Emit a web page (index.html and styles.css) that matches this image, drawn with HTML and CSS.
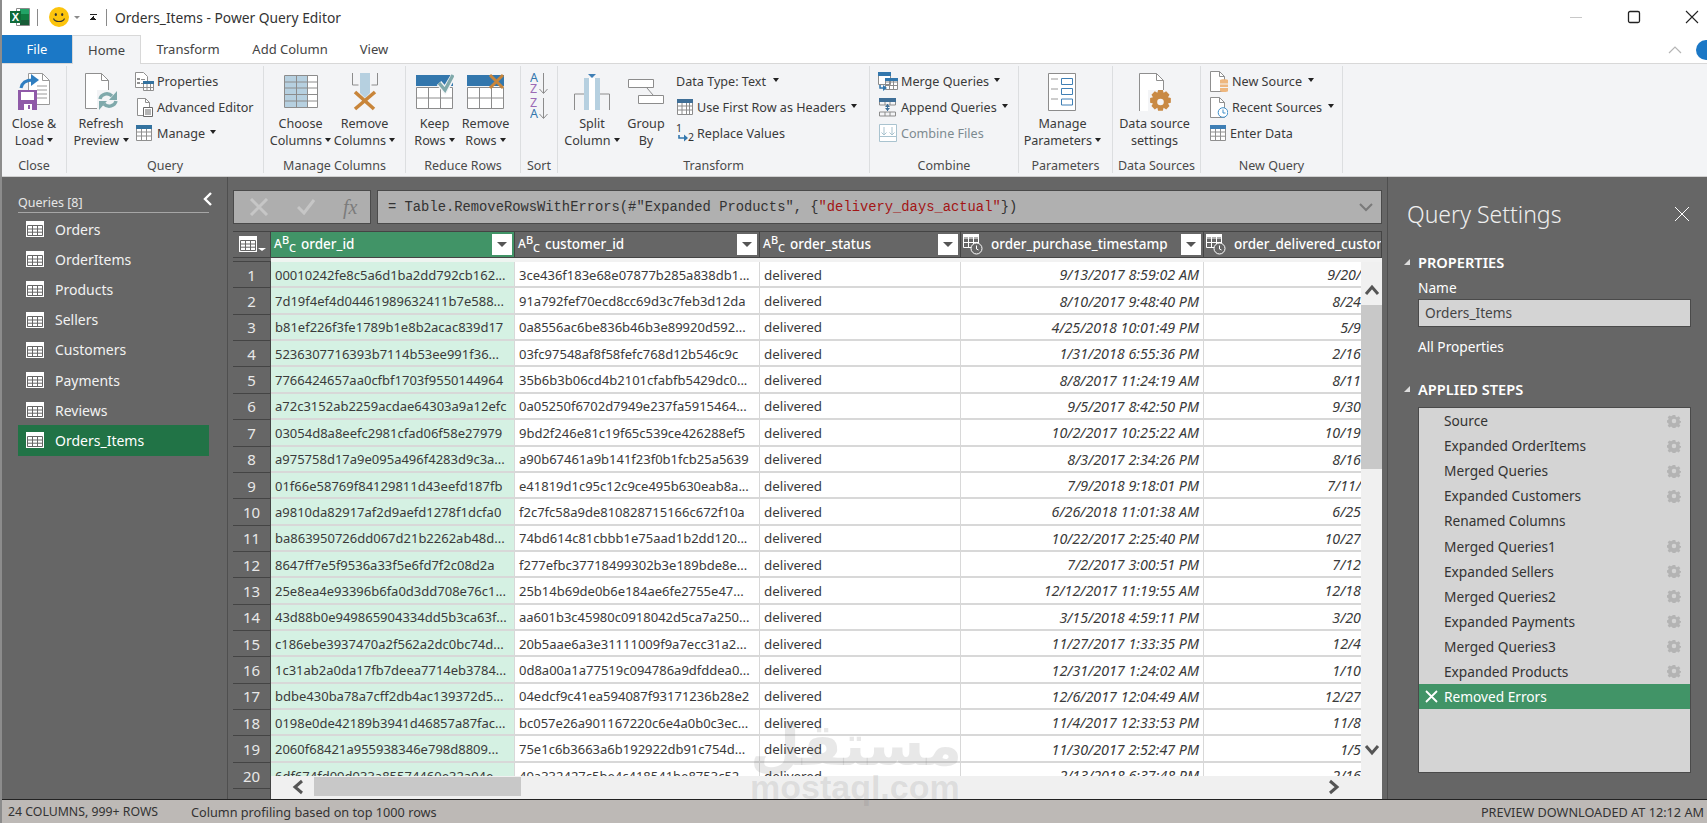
FILE: index.html
```html
<!DOCTYPE html>
<html>

<head>
  <meta charset="utf-8">
  <meta name="viewport" content="width=device-width, initial-scale=1">
  <title>Orders_Items - Power Query Editor</title>
  <link rel="stylesheet" href="styles.css">
</head>

<body>
  <svg class="defs" width="0" height="0">
    <symbol id="i-table" viewBox="0 0 18 16">
      <path fill="#fff" d="M0 0h18v16H0z" />
      <path fill="none" stroke="#666" d="M1.500 4.500h15v10h-15zM1.500 8h15M1.500 11.200h15M6.500 4.500v10M11.500 4.500v10" />
    </symbol>
    <symbol id="i-gear" viewBox="0 0 16 16">
      <path fill="#b4b4b4" d="M6.500 1h3l.4 2 1.500.7 1.800-1.100 2 2-1.100 1.800.7 1.500 2 .4v1.400l-2 .4-.7 1.500 1.100 1.800-2 2-1.800-1.100-1.500.7-.4 2h-3l-.4-2-1.500-.7-1.800 1.100-2-2 1.100-1.800-.7-1.500-2-.4V7.300l2-.4.7-1.500-1.100-1.800 2-2 1.800 1.100 1.500-.7z" />
      <circle cx="8" cy="8" r="2.600" fill="#d4d4d4" />
    </symbol>
    <symbol id="i-cal" viewBox="0 0 20 22">
      <path fill="none" stroke="#fff" d="M.5 1.500h15v13H.5zM.5 5h15M5.500 1.500v13M10.500 1.500v13M.5 9.500h15" />
      <path fill="#fff" d="M0 1h16v3H0z" />
      <circle cx="13.500" cy="15.500" r="5.500" fill="#666" stroke="#fff" />
      <path fill="none" stroke="#fff" d="M13.500 12.500v3.500l2 1" />
    </symbol>
  </svg>

  <div class="window">
    <div class="titlebar">
      <svg class="excel" width="20" height="18" viewBox="0 0 20 18">
        <path fill="#fff" stroke="#8a8a8a" d="M6.500.500h13v17h-13z" />
        <path fill="#21a366" d="M10 1h9v5h-9z" />
        <path fill="#107c41" d="M10 6h9v6h-9z" />
        <path fill="#185c37" d="M10 12h9v5h-9z" />
        <path fill="#0f6b3a" d="M0 3h11v12H0z" />
        <text x="5.500" y="12.500" class="excel-x">X</text>
      </svg>
      <span class="title-sep"></span>
      <svg class="smiley" width="20" height="20" viewBox="0 0 20 20">
        <circle cx="10" cy="10" r="10" fill="#fcc40c" />
        <ellipse cx="6.800" cy="7.500" rx="1.100" ry="1.600" fill="#333" />
        <ellipse cx="13.200" cy="7.500" rx="1.100" ry="1.600" fill="#333" />
        <path fill="none" stroke="#333" stroke-width="1.100" d="M4.500 11.500c1.500 4 9.500 4 11 0" />
      </svg>
      <span class="qa-arrow"></span>
      <span class="qa-more"></span>
      <span class="title-sep second"></span>
      <span class="title-text">Orders_Items - Power Query Editor</span>
      <span class="win-controls">
        <svg width="14" height="14" viewBox="0 0 14 14"><path stroke="#c8c8c8" d="M1 7.500h12" /></svg>
        <svg width="14" height="14" viewBox="0 0 14 14"><rect x="1.500" y="1.500" width="11" height="11" rx="1.500" fill="none" stroke="#222" stroke-width="1.300" /></svg>
        <svg width="14" height="14" viewBox="0 0 14 14"><path stroke="#222" stroke-width="1.100" d="M1 1l12 12M13 1L1 13" /></svg>
      </span>
    </div>

    <div class="tabs">
      <div class="tab file">File</div>
      <div class="tab active">Home</div>
      <div class="tab t-transform">Transform</div>
      <div class="tab t-add">Add Column</div>
      <div class="tab t-view">View</div>
      <div class="tabs-right">
        <svg width="14" height="8" viewBox="0 0 14 8"><path fill="none" stroke="#b5b5b5" stroke-width="1.200" d="M1 7l6-6 6 6" /></svg>
        <span class="help"></span>
      </div>
    </div>

    <div class="ribbon">
      <div class="group g-close">
        <div class="group-body">
          <div class="big">
            <svg class="big-icon" width="34" height="38" viewBox="0 0 34 38">
              <path fill="#fff" stroke="#9a9a9a" d="M11.500.500h14l7 7v24h-21z" />
              <path fill="none" stroke="#9a9a9a" d="M25.500.500v7h7M20 13h10M20 17h10M20 21h10M20 25h10" />
              <path fill="none" stroke="#2f7ec0" stroke-width="3" d="M4 15c1-6 6-8 12-8" />
              <path fill="#2f7ec0" d="M14 1l8 6-8 6z" />
              <path fill="#8f5aa8" d="M1 17h19v20H1z" />
              <path fill="#fff" d="M4 19h13v8H4zM7 31h8v6H7z" />
              <path fill="#8f5aa8" d="M11 32h2v4h-2z" />
            </svg>
            <div class="big-text">Close &amp;<br>Load <i class="caret"></i></div>
          </div>
        </div>
        <div class="group-label">Close</div>
      </div>

      <div class="group g-query">
        <div class="group-body">
          <div class="big">
            <svg class="big-icon" width="36" height="38" viewBox="0 0 36 38">
              <path fill="#fff" stroke="#8f8f8f" d="M2.500.500h16l7 7v28h-23z" />
              <path fill="none" stroke="#8f8f8f" d="M18.500.500v7h7" />
              <rect x="14" y="17" width="22" height="21" fill="#f3f4f6" />
              <path fill="none" stroke="#7fa9ab" stroke-width="3.400" d="M17 26c1-5 8-7 12-3M33 28c-1 5-8 7-12 3" />
              <path fill="#7fa9ab" d="M34 18v9h-8zM16 37v-9h8z" />
            </svg>
            <div class="big-text">Refresh<br>Preview <i class="caret"></i></div>
          </div>
          <div class="stack">
            <div class="small">
              <svg width="20" height="20" viewBox="0 0 20 20">
                <path fill="#fff" stroke="#8f8f8f" d="M1.500 1.500h8l4 4v11h-12z" />
                <path fill="#8f8f8f" d="M3 7h3v2H3zM3 11h3v2H3zM7 8h4v1H7zM7 12h2v1H7z" />
                <path fill="#fff" stroke="#8f8f8f" d="M9.500 10.500h10v9h-10z" />
                <path fill="#33729f" d="M9 10h11v3H9z" />
                <path stroke="#8f8f8f" d="M9.500 16.500h10M13 13v7M16.500 13v7" />
              </svg>
              <span>Properties</span>
            </div>
            <div class="small">
              <svg width="20" height="20" viewBox="0 0 20 20">
                <path fill="#fff" stroke="#8f8f8f" d="M3.500 1.500h8l4 4v13h-12z" />
                <path fill="none" stroke="#8f8f8f" d="M11.500 1.500v4h4" />
                <path fill="#fff" stroke="#6a6a6a" d="M9.500 10.500h9v9h-9z" />
                <path stroke="#6a6a6a" d="M11 13h6M11 15h6M11 17h6" />
              </svg>
              <span>Advanced Editor</span>
            </div>
            <div class="small">
              <svg width="20" height="18" viewBox="0 0 20 18">
                <path fill="#fff" stroke="#8f8f8f" d="M2.500 1.500h15v15h-15zM2.500 8h15M2.500 12h15M7.500 5v11.500M12.500 5v11.500" />
                <path fill="#33729f" d="M2 1h16v4H2z" />
              </svg>
              <span>Manage</span><i class="caret gap"></i>
            </div>
          </div>
        </div>
        <div class="group-label">Query</div>
      </div>

      <div class="group g-columns">
        <div class="group-body">
          <div class="big">
            <svg class="big-icon" width="34" height="34" viewBox="0 0 34 34">
              <path fill="#fff" d="M0 0h34v33H0z" />
              <path fill="#b6d0e0" d="M1 1h23v31H1z" />
              <path fill="none" stroke="#8c8c8c" d="M.5.500h33v32H.500zM.5 7h33M.5 13h33M.5 19.500h33M.5 26h33M12.500.500v32M23.500.500v32" />
            </svg>
            <div class="big-text">Choose<br>Columns <i class="caret"></i></div>
          </div>
          <div class="big">
            <svg class="big-icon" width="26" height="38" viewBox="0 0 26 38">
              <path fill="none" stroke="#8c8c8c" d="M.5 0v12h6M25.500 0v12h-6" />
              <path fill="#b6d0e0" d="M8 0h10v20l-5 5-5-5z" />
              <path fill="none" stroke="#c8853a" stroke-width="3.600" d="M3 19l19 17M23 19L3 36" />
            </svg>
            <div class="big-text">Remove<br>Columns <i class="caret"></i></div>
          </div>
        </div>
        <div class="group-label">Manage Columns</div>
      </div>

      <div class="group g-rows">
        <div class="group-body">
          <div class="big">
            <svg class="big-icon" width="38" height="38" viewBox="0 0 38 38">
              <path fill="#3377ad" d="M0 2h37v11H0z" />
              <path fill="#fff" stroke="#8c8c8c" d="M.5 14.500h36v21h-36zM.5 25h36M12.500 14.500v21M24.500 14.500v21" />
              <path fill="none" stroke="#f3f4f6" stroke-width="6" d="M23 10l6 7 9-15" />
              <path fill="none" stroke="#7fa9ab" stroke-width="3.400" d="M23 10l6 7 8-15" />
            </svg>
            <div class="big-text">Keep<br>Rows <i class="caret"></i></div>
          </div>
          <div class="big">
            <svg class="big-icon" width="38" height="38" viewBox="0 0 38 38">
              <path fill="#3377ad" d="M0 2h37v11H0z" />
              <path fill="#fff" stroke="#8c8c8c" d="M.5 14.500h36v21h-36zM.5 25h36M12.500 14.500v21M24.500 14.500v21" />
              <path fill="none" stroke="#c8853a" stroke-width="3" d="M23 2l13 13M36 2L23 15" />
            </svg>
            <div class="big-text">Remove<br>Rows <i class="caret"></i></div>
          </div>
        </div>
        <div class="group-label">Reduce Rows</div>
      </div>

      <div class="group g-sort">
        <div class="group-body">
          <div class="sort-stack">
            <svg width="18" height="24" viewBox="0 0 18 24">
              <text x="0" y="10" class="sort-a">A</text>
              <text x="0" y="21" class="sort-z">Z</text>
              <path fill="none" stroke="#8c8c8c" d="M13.500 1v20M9.500 17l4 4.500 4-4.500" />
            </svg>
            <svg width="18" height="24" viewBox="0 0 18 24">
              <text x="0" y="10" class="sort-z">Z</text>
              <text x="0" y="21" class="sort-a">A</text>
              <path fill="none" stroke="#8c8c8c" d="M13.500 1v20M9.500 17l4 4.500 4-4.500" />
            </svg>
          </div>
        </div>
        <div class="group-label">Sort</div>
      </div>

      <div class="group g-transform">
        <div class="group-body">
          <div class="big">
            <svg class="big-icon" width="36" height="38" viewBox="0 0 36 38">
              <path fill="none" stroke="#8c8c8c" d="M.5 37V21h10M35.500 37V21h-10" />
              <path fill="#b6d0e0" d="M10 5h5v32h-5zM21 5h5v32h-5z" />
              <path fill="#fff" d="M15 5h6v32h-6z" />
              <path fill="#3f7fb5" d="M14 1h8l-4 4z" />
            </svg>
            <div class="big-text">Split<br>Column <i class="caret"></i></div>
          </div>
          <div class="big">
            <svg class="big-icon" width="36" height="26" viewBox="0 0 36 26">
              <path fill="#fff" stroke="#8c8c8c" d="M.5.500h25v8h-25zM10.500 16.500h25v8h-25z" />
              <path fill="none" stroke="#8c8c8c" d="M19 9l6 7" />
            </svg>
            <div class="big-text">Group<br>By</div>
          </div>
          <div class="stack">
            <div class="small plain">Data Type: Text<i class="caret gap"></i></div>
            <div class="small">
              <svg width="18" height="18" viewBox="0 0 18 18">
                <path fill="#fff" stroke="#8c8c8c" d="M1.500 1.500h15v15h-15zM1.500 8h15M1.500 12h15M6 5v11.500M10.500 5v11.500M13.500 5v11.500" />
                <path fill="#3f6f97" d="M1 1h16v4H1z" />
              </svg>
              <span>Use First Row as Headers</span><i class="caret gap"></i>
            </div>
            <div class="small">
              <svg width="18" height="20" viewBox="0 0 18 20">
                <text x="0" y="9" class="rep-num">1</text>
                <text x="12" y="18" class="rep-num">2</text>
                <path fill="none" stroke="#3377ad" stroke-width="1.600" d="M3 12v3h6" />
                <path fill="#3377ad" d="M8 11.500l4 3.500-4 3.500z" />
              </svg>
              <span>Replace Values</span>
            </div>
          </div>
        </div>
        <div class="group-label">Transform</div>
      </div>

      <div class="group g-combine">
        <div class="group-body">
          <div class="stack">
            <div class="small">
              <svg width="20" height="20" viewBox="0 0 20 20">
                <path fill="#fff" stroke="#8c8c8c" d="M.5 1.500h12v12H.5zM7.500 7.500h12v11h-12zM7.500 11h12M7.500 14.500h12M11.500 7.500v11M15.500 7.500v11" />
                <path fill="#3377ad" d="M0 1h13v4H0zM7 7h13v3H7z" />
                <path fill="none" stroke="#3377ad" stroke-width="1.500" d="M2 14v3h4" />
                <path fill="#3377ad" d="M5 14l4 3-4 3z" />
              </svg>
              <span>Merge Queries</span><i class="caret gap"></i>
            </div>
            <div class="small">
              <svg width="20" height="20" viewBox="0 0 20 20">
                <path fill="#3f6f97" d="M1 1h17v4H1z" />
                <path fill="none" stroke="#8c8c8c" d="M1.500 5v3h16V5M7 5v3M12 5v3M1.500 19v-4h16v4h-16zM7 15v4M12 15v4" />
                <path fill="none" stroke="#3f6f97" d="M9.500 7v7" />
                <path fill="#3f6f97" d="M7 10l2.500-3L12 10zM7 11l2.500 3 2.500-3z" />
              </svg>
              <span>Append Queries</span><i class="caret gap"></i>
            </div>
            <div class="small muted">
              <svg width="20" height="20" viewBox="0 0 20 20">
                <path fill="#fff" stroke="#a9c3cf" d="M1.500 1.500h17v17h-17zM2 13.500h16" />
                <path fill="none" stroke="#a9c3cf" d="M6 4v8M3.500 9.500L6 12l2.500-2.500M14 4v8M11.500 9.500L14 12l2.500-2.500" />
              </svg>
              <span>Combine Files</span>
            </div>
          </div>
        </div>
        <div class="group-label">Combine</div>
      </div>

      <div class="group g-params">
        <div class="group-body">
          <div class="big">
            <svg class="big-icon" width="28" height="38" viewBox="0 0 28 38">
              <path fill="#fff" stroke="#8c8c8c" d="M.5.500h27v37H.500z" />
              <path stroke="#9a9a9a" d="M3 6h7M3 16h7M3 26h7" />
              <path fill="#fff" stroke="#3f7fb5" d="M13.500 5.500h11v6h-11zM13.500 15.500h11v6h-11zM13.500 26h11v6h-11z" />
            </svg>
            <div class="big-text">Manage<br>Parameters <i class="caret"></i></div>
          </div>
        </div>
        <div class="group-label">Parameters</div>
      </div>

      <div class="group g-sources">
        <div class="group-body">
          <div class="big">
            <svg class="big-icon" width="32" height="38" viewBox="0 0 32 38">
              <path fill="#fff" stroke="#8f8f8f" d="M.5.500h17l7 7v31H.5z" />
              <path fill="none" stroke="#8f8f8f" d="M17.500.500v7h7" />
              <rect x="9" y="17" width="23" height="21" fill="#f3f4f6" />
              <path fill="#c98a44" d="M18 20h5l.8 3 2.700-1.600 3.500 3.500-1.600 2.700 3 .8v5l-3 .8 1.600 2.700-3.500 3.500-2.700-1.600-.8 3h-5l-.8-3-2.700 1.600-3.500-3.500 1.600-2.700-3-.8v-5l3-.8-1.600-2.700 3.500-3.500 2.700 1.600z" transform="translate(2 -2) scale(.95)" />
              <circle cx="21.500" cy="29" r="3.300" fill="#f3f4f6" />
            </svg>
            <div class="big-text">Data source<br>settings</div>
          </div>
        </div>
        <div class="group-label">Data Sources</div>
      </div>

      <div class="group g-new">
        <div class="group-body">
          <div class="stack">
            <div class="small tight">
              <svg width="18" height="21" viewBox="0 0 18 21">
                <path fill="#fff" stroke="#8f8f8f" d="M.5.500h9l5 5v15H.5z" />
                <path fill="none" stroke="#8f8f8f" d="M9.500.500v5h5" />
                <path fill="#eeb77f" d="M10 9c0-1 8-1 8 0v11c0 1.300-8 1.300-8 0z" />
                <path stroke="#f3f4f6" d="M10 13h8M10 16.500h8" />
              </svg>
              <span>New Source</span><i class="caret gap"></i>
            </div>
            <div class="small tight">
              <svg width="18" height="21" viewBox="0 0 18 21">
                <path fill="#fff" stroke="#8f8f8f" d="M.5.500h9l5 5v15H.5z" />
                <path fill="none" stroke="#8f8f8f" d="M9.500.500v5h5" />
                <circle cx="13" cy="15.500" r="4.800" fill="#fff" stroke="#3f8fc9" />
                <path fill="none" stroke="#3f8fc9" d="M13 12.500v3.500h2.500" />
              </svg>
              <span>Recent Sources</span><i class="caret gap"></i>
            </div>
            <div class="small tight">
              <svg width="16" height="18" viewBox="0 0 16 18">
                <path fill="#fff" stroke="#8f8f8f" d="M.5 1.500h15v15H.5zM.5 8h15M.5 12.200h15M5.500 5v11.500M10.500 5v11.500" />
                <path fill="#3f7fb5" d="M0 1h16v4H0z" />
              </svg>
              <span>Enter Data</span>
            </div>
          </div>
        </div>
        <div class="group-label">New Query</div>
      </div>
    </div>

    <div class="main">
      <div class="queries">
        <div class="queries-head">
          <span>Queries [8]</span>
          <svg width="9" height="14" viewBox="0 0 9 14"><path fill="none" stroke="#fff" stroke-width="2.400" d="M8 1L2 7l6 6" /></svg>
        </div>
        <div class="query"><svg width="18" height="16"><use href="#i-table" /></svg>Orders</div>
        <div class="query"><svg width="18" height="16"><use href="#i-table" /></svg>OrderItems</div>
        <div class="query"><svg width="18" height="16"><use href="#i-table" /></svg>Products</div>
        <div class="query"><svg width="18" height="16"><use href="#i-table" /></svg>Sellers</div>
        <div class="query"><svg width="18" height="16"><use href="#i-table" /></svg>Customers</div>
        <div class="query"><svg width="18" height="16"><use href="#i-table" /></svg>Payments</div>
        <div class="query"><svg width="18" height="16"><use href="#i-table" /></svg>Reviews</div>
        <div class="query selected"><svg width="18" height="16"><use href="#i-table" /></svg>Orders_Items</div>
      </div>

      <div class="center">
        <div class="formula-row">
          <div class="formula-btns">
            <svg width="20" height="18" viewBox="0 0 20 18"><path stroke="#c6c6c6" stroke-width="3" d="M2 1l16 16M18 1L2 17" /></svg>
            <svg width="18" height="16" viewBox="0 0 18 16"><path fill="none" stroke="#c6c6c6" stroke-width="3" d="M1 8l6 6L17 1" /></svg>
            <span class="fx">fx</span>
          </div>
          <div class="formula">
            <span>= Table.RemoveRowsWithErrors(#"Expanded Products", {<b>"delivery_days_actual"</b>})</span>
            <svg width="14" height="9" viewBox="0 0 14 9"><path fill="none" stroke="#7a7a7a" stroke-width="2" d="M1 1l6 6 6-6" /></svg>
          </div>
        </div>

        <div class="grid">
          <div class="grid-head">
            <div class="hcell corner">
              <svg width="18" height="16"><use href="#i-table" /></svg>
              <i class="corner-caret"></i>
            </div>
            <div class="hcell c1 on"><span class="abc">A<sup>B</sup><sub>C</sub></span><span class="hname">order_id</span><span class="filter"></span></div>
            <div class="hcell c2"><span class="abc">A<sup>B</sup><sub>C</sub></span><span class="hname">customer_id</span><span class="filter"></span></div>
            <div class="hcell c3"><span class="abc">A<sup>B</sup><sub>C</sub></span><span class="hname">order_status</span><span class="filter"></span></div>
            <div class="hcell c4"><svg class="cal" width="20" height="22"><use href="#i-cal" /></svg><span class="hname">order_purchase_timestamp</span><span class="filter"></span></div>
            <div class="hcell c5"><svg class="cal" width="20" height="22"><use href="#i-cal" /></svg><span class="hname">order_delivered_custom</span></div>
          </div>
          <div class="grid-strip"><span class="strip-num"></span><span class="strip-sel"></span></div>

          <div class="grid-body">
            <table class="rows">
              <tr><th>1</th><td class="c1">00010242fe8c5a6d1ba2dd792cb162...</td><td class="c2">3ce436f183e68e07877b285a838db1...</td><td class="c3">delivered</td><td class="c4">9/13/2017 8:59:02 AM</td><td class="c5">9/20/</td></tr>
              <tr><th>2</th><td class="c1">7d19f4ef4d04461989632411b7e588...</td><td class="c2">91a792fef70ecd8cc69d3c7feb3d12da</td><td class="c3">delivered</td><td class="c4">8/10/2017 9:48:40 PM</td><td class="c5">8/24</td></tr>
              <tr><th>3</th><td class="c1">b81ef226f3fe1789b1e8b2acac839d17</td><td class="c2">0a8556ac6be836b46b3e89920d592...</td><td class="c3">delivered</td><td class="c4">4/25/2018 10:01:49 PM</td><td class="c5">5/9</td></tr>
              <tr><th>4</th><td class="c1">5236307716393b7114b53ee991f36...</td><td class="c2">03fc97548af8f58fefc768d12b546c9c</td><td class="c3">delivered</td><td class="c4">1/31/2018 6:55:36 PM</td><td class="c5">2/16</td></tr>
              <tr><th>5</th><td class="c1">7766424657aa0cfbf1703f9550144964</td><td class="c2">35b6b3b06cd4b2101cfabfb5429dc0...</td><td class="c3">delivered</td><td class="c4">8/8/2017 11:24:19 AM</td><td class="c5">8/11</td></tr>
              <tr><th>6</th><td class="c1">a72c3152ab2259acdae64303a9a12efc</td><td class="c2">0a05250f6702d7949e237fa5915464...</td><td class="c3">delivered</td><td class="c4">9/5/2017 8:42:50 PM</td><td class="c5">9/30</td></tr>
              <tr><th>7</th><td class="c1">03054d8a8eefc2981cfad06f58e27979</td><td class="c2">9bd2f246e81c19f65c539ce426288ef5</td><td class="c3">delivered</td><td class="c4">10/2/2017 10:25:22 AM</td><td class="c5">10/19</td></tr>
              <tr><th>8</th><td class="c1">a975758d17a9e095a496f4283d9c3a...</td><td class="c2">a90b67461a9b141f23f0b1fcb25a5639</td><td class="c3">delivered</td><td class="c4">8/3/2017 2:34:26 PM</td><td class="c5">8/16</td></tr>
              <tr><th>9</th><td class="c1">01f66e58769f84129811d43eefd187fb</td><td class="c2">e41819d1c95c12c9ce495b630eab8a...</td><td class="c3">delivered</td><td class="c4">7/9/2018 9:18:01 PM</td><td class="c5">7/11/</td></tr>
              <tr><th>10</th><td class="c1">a9810da82917af2d9aefd1278f1dcfa0</td><td class="c2">f2c7fc58a9de810828715166c672f10a</td><td class="c3">delivered</td><td class="c4">6/26/2018 11:01:38 AM</td><td class="c5">6/25</td></tr>
              <tr><th>11</th><td class="c1">ba863950726dd067d21b2262ab48d...</td><td class="c2">74bd614c81cbbb1e75aad1b2dd120...</td><td class="c3">delivered</td><td class="c4">10/22/2017 2:25:40 PM</td><td class="c5">10/27</td></tr>
              <tr><th>12</th><td class="c1">8647ff7e5f9536a33f5e6fd7f2c08d2a</td><td class="c2">f277efbc37718499302b3e189bde8e...</td><td class="c3">delivered</td><td class="c4">7/2/2017 3:00:51 PM</td><td class="c5">7/12</td></tr>
              <tr><th>13</th><td class="c1">25e8ea4e93396b6fa0d3dd708e76c1...</td><td class="c2">25b14b69de0b6e184ae6fe2755e47...</td><td class="c3">delivered</td><td class="c4">12/12/2017 11:19:55 AM</td><td class="c5">12/18</td></tr>
              <tr><th>14</th><td class="c1">43d88b0e949865904334dd5b3ca63f...</td><td class="c2">aa601b3c45980c0918042d5ca7a250...</td><td class="c3">delivered</td><td class="c4">3/15/2018 4:59:11 PM</td><td class="c5">3/20</td></tr>
              <tr><th>15</th><td class="c1">c186ebe3937470a2f562a2dc0bc74d...</td><td class="c2">20b5aae6a3e31111009f9a7ecc31a2...</td><td class="c3">delivered</td><td class="c4">11/27/2017 1:33:35 PM</td><td class="c5">12/4</td></tr>
              <tr><th>16</th><td class="c1">1c31ab2a0da17fb7deea7714eb3784...</td><td class="c2">0d8a00a1a77519c094786a9dfddea0...</td><td class="c3">delivered</td><td class="c4">12/31/2017 1:24:02 AM</td><td class="c5">1/10</td></tr>
              <tr><th>17</th><td class="c1">bdbe430ba78a7cff2db4ac139372d5...</td><td class="c2">04edcf9c41ea594087f93171236b28e2</td><td class="c3">delivered</td><td class="c4">12/6/2017 12:04:49 AM</td><td class="c5">12/27</td></tr>
              <tr><th>18</th><td class="c1">0198e0de42189b3941d46857a87fac...</td><td class="c2">bc057e26a901167220c6e4a0b0c3ec...</td><td class="c3">delivered</td><td class="c4">11/4/2017 12:33:53 PM</td><td class="c5">11/8</td></tr>
              <tr><th>19</th><td class="c1">2060f68421a955938346e798d8809...</td><td class="c2">75e1c6b3663a6b192922db91c754d...</td><td class="c3">delivered</td><td class="c4">11/30/2017 2:52:47 PM</td><td class="c5">1/5</td></tr>
              <tr><th>20</th><td class="c1">6df674fd09d933a85574460e32a94e...</td><td class="c2">49a332427c5be4c418541be8753c52...</td><td class="c3">delivered</td><td class="c4">2/13/2018 6:37:48 PM</td><td class="c5">2/16</td></tr>
              <tr><th></th><td class="c1"></td><td class="c2"></td><td class="c3"></td><td class="c4"></td><td class="c5"></td></tr>
            </table>

            <div class="vbar">
              <div class="vbar-thumb"></div>
              <svg class="vbar-up" width="16" height="12" viewBox="0 0 16 12"><path fill="none" stroke="#555" stroke-width="3" d="M2 10l6-7 6 7" /></svg>
              <svg class="vbar-down" width="16" height="12" viewBox="0 0 16 12"><path fill="none" stroke="#555" stroke-width="3" d="M2 2l6 7 6-7" /></svg>
            </div>
            <div class="hbar">
              <svg class="hbar-left" width="12" height="16" viewBox="0 0 12 16"><path fill="none" stroke="#555" stroke-width="3" d="M10 2L3 8l7 6" /></svg>
              <div class="hbar-thumb"></div>
              <svg class="hbar-right" width="12" height="16" viewBox="0 0 12 16"><path fill="none" stroke="#555" stroke-width="3" d="M2 2l7 6-7 6" /></svg>
            </div>
          </div>

          <div class="watermark">
            <div class="wm-ar">مستقل</div>
            <div class="wm-en">mostaql.com</div>
          </div>
        </div>
      </div>

      <div class="settings">
        <div class="settings-head">
          <span>Query Settings</span>
          <svg width="14" height="14" viewBox="0 0 14 14"><path stroke="#fff" d="M0 0l14 14M14 0L0 14" /></svg>
        </div>
        <div class="section"><i class="tri"></i>PROPERTIES</div>
        <div class="field-label">Name</div>
        <div class="name-input">Orders_Items</div>
        <div class="all-props">All Properties</div>
        <div class="section applied"><i class="tri"></i>APPLIED STEPS</div>
        <div class="steps">
          <div class="step">Source<svg width="14" height="14"><use href="#i-gear" /></svg></div>
          <div class="step">Expanded OrderItems<svg width="14" height="14"><use href="#i-gear" /></svg></div>
          <div class="step">Merged Queries<svg width="14" height="14"><use href="#i-gear" /></svg></div>
          <div class="step">Expanded Customers<svg width="14" height="14"><use href="#i-gear" /></svg></div>
          <div class="step">Renamed Columns</div>
          <div class="step">Merged Queries1<svg width="14" height="14"><use href="#i-gear" /></svg></div>
          <div class="step">Expanded Sellers<svg width="14" height="14"><use href="#i-gear" /></svg></div>
          <div class="step">Merged Queries2<svg width="14" height="14"><use href="#i-gear" /></svg></div>
          <div class="step">Expanded Payments<svg width="14" height="14"><use href="#i-gear" /></svg></div>
          <div class="step">Merged Queries3<svg width="14" height="14"><use href="#i-gear" /></svg></div>
          <div class="step">Expanded Products<svg width="14" height="14"><use href="#i-gear" /></svg></div>
          <div class="step current">
            <svg class="step-x" width="13" height="13" viewBox="0 0 13 13"><path stroke="#fff" stroke-width="1.800" d="M1 1l11 11M12 1L1 12" /></svg>
            Removed Errors
          </div>
        </div>
      </div>
    </div>

    <div class="statusbar">
      <span class="status-cols">24 COLUMNS, 999+ ROWS</span>
      <span>Column profiling based on top 1000 rows</span>
      <span class="status-right">PREVIEW DOWNLOADED AT 12:12 AM</span>
    </div>
  </div>
</body>

</html>
```

FILE: styles.css
```css
* {
  margin: 0;
  padding: 0;
  box-sizing: border-box;
}

html,
body {
  height: 100%;
  overflow: hidden;
}

body {
  font-family: 'Noto Sans', 'Open Sans', Arial, sans-serif;
  background: #8c8c8c;
  color: #333;
  padding-left: 2px;
}

.defs {
  position: absolute;
}

.window {
  height: 823px;
  display: flex;
  flex-direction: column;
  background: #666;
}

/* title bar */
.titlebar {
  height: 35px;
  flex: none;
  display: flex;
  align-items: center;
  background: #fff;
  padding-bottom: 1px;
}

.excel {
  margin-left: 8px;
}

.excel-x {
  font-family: 'Liberation Sans', Arial, sans-serif;
  font-size: 11px;
  font-weight: bold;
  fill: #fff;
  text-anchor: middle;
}

.title-sep {
  width: 1px;
  height: 17px;
  background: #8a8a8a;
  margin: 0 11px 0 7px;
}

.title-sep.second {
  margin: 0 7px 0 9px;
}

.qa-arrow {
  width: 0;
  height: 0;
  border-left: 3px solid transparent;
  border-right: 3px solid transparent;
  border-top: 3px solid #8a8a8a;
  margin-left: 5px;
}

.qa-more {
  width: 7px;
  height: 6px;
  border-top: 1px solid #222;
  margin-left: 10px;
  background: linear-gradient(135deg, transparent 50%, #222 50%) left bottom / 4px 4px no-repeat,
    linear-gradient(225deg, transparent 50%, #222 50%) right bottom / 4px 4px no-repeat;
}

.title-text {
  font-size: 13.8px;
  color: #333;
  margin-left: 1px;
}

.win-controls {
  margin-left: auto;
  display: flex;
  gap: 44px;
  padding-right: 8px;
}

/* tabs */
.tabs {
  height: 28px;
  flex: none;
  display: flex;
  align-items: stretch;
  background: #fff;
  font-size: 13px;
  position: relative;
}

.tab {
  display: flex;
  align-items: center;
  justify-content: center;
  color: #444;
}

.tab.file {
  width: 70px;
  background: #1b78c6;
  color: #fff;
}

.tab.active {
  width: 69px;
  background: #f3f4f6;
  border: 1px solid #d8d8d8;
  border-bottom: none;
  margin-bottom: -1px;
  position: relative;
  z-index: 1;
}

.t-transform {
  width: 94px;
}

.t-add {
  width: 110px;
}

.t-view {
  width: 58px;
}

.tabs-right {
  margin-left: auto;
  display: flex;
  align-items: center;
  gap: 14px;
  margin-right: -9px;
  padding-top: 2px;
}

.help {
  width: 20px;
  height: 20px;
  border-radius: 50%;
  background: #1b78c6;
}

/* ribbon */
.ribbon {
  height: 114px;
  flex: none;
  display: flex;
  background: #f3f4f6;
  border-top: 1px solid #d8d8d8;
  border-bottom: 1px solid #d0d0d0;
  padding-top: 2px;
  font-size: 12.6px;
  color: #3a3a3a;
}

.group {
  height: 107px;
  flex: none;
  display: flex;
  flex-direction: column;
  border-right: 1px solid #dcdee0;
}

.group-body {
  flex: 1;
  display: flex;
  justify-content: center;
  min-height: 0;
}

.group-label {
  height: 15px;
  line-height: 15px;
  font-size: 12.5px;
  text-align: center;
  color: #4a4a4a;
}

.g-close { width: 65px; }
.g-query { width: 197px; }
.g-columns { width: 142px; }
.g-rows { width: 115px; }
.g-sort { width: 37px; }
.g-transform { width: 312px; }
.g-combine { width: 149px; }
.g-params { width: 94px; }
.g-sources { width: 88px; }
.g-new { width: 142px; }

.g-query .group-body {
  justify-content: flex-start;
  padding-left: 1px;
}

.g-query .big {
  width: 66px;
}

.g-columns .group-body {
  padding-right: 4px;
}

.g-columns .big {
  width: 64px;
}

.g-rows .group-body {
  padding-right: 6px;
}

.g-rows .big {
  width: 51px;
}

.g-transform .group-body {
  justify-content: flex-start;
  padding-left: 7px;
}

.g-transform .big {
  width: 54px;
}

.g-transform .stack {
  margin-left: 3px;
}

.g-combine .group-body {
  justify-content: flex-start;
  padding-left: 8px;
}

.g-new .group-body {
  justify-content: flex-start;
  padding-left: 9px;
}

.g-params .group-body {
  padding-right: 6px;
}

.g-sources .group-body {
  padding-right: 4px;
}

.big {
  display: flex;
  flex-direction: column;
  align-items: center;
}

.big-icon {
  flex: none;
}

.big svg {
  margin-top: 7px;
  margin-bottom: 4px;
}

.g-transform .big:nth-child(2) svg {
  margin-top: 13px;
  margin-bottom: 10px;
}

.g-columns .big:first-child svg {
  margin-top: 9px;
  margin-bottom: 6px;
}

.big-text {
  text-align: center;
  line-height: 17px;
  white-space: nowrap;
  margin-top: auto;
  margin-bottom: 9px;
}

.caret {
  display: inline-block;
  width: 0;
  height: 0;
  border-left: 3.5px solid transparent;
  border-right: 3.5px solid transparent;
  border-top: 4px solid #222;
  vertical-align: 3px;
}

.caret.gap {
  margin-left: 2px;
  margin-bottom: 3px;
  vertical-align: 0;
  flex: none;
}

.small.plain .caret.gap {
  margin-left: 4px;
}

.stack {
  display: flex;
  flex-direction: column;
  padding-top: 2px;
}

.small {
  height: 26px;
  display: flex;
  align-items: center;
  gap: 3px;
  white-space: nowrap;
}

.small svg {
  flex: none;
}

.small.muted {
  color: #7d8a90;
}

.small.tight {
  gap: 4px;
}

.sort-stack {
  display: flex;
  flex-direction: column;
  padding-top: 6px;
  gap: 1px;
}

.sort-a,
.sort-z {
  font-family: 'Noto Sans', Arial, sans-serif;
  font-size: 12.5px;
}

.sort-a {
  fill: #3377ad;
}

.sort-z {
  fill: #9b6ab5;
}

.rep-num {
  font-size: 10.5px;
  fill: #333;
}

/* main area */
.main {
  flex: 1;
  display: flex;
  min-height: 0;
  border-bottom: 1px solid #222;
}

.queries {
  width: 226px;
  flex: none;
  padding: 16px 0 0 16px;
  border-right: 1px solid #4f4f4f;
}

.queries-head {
  width: 191px;
  height: 20px;
  display: flex;
  justify-content: space-between;
  align-items: flex-start;
  color: #e6e6e6;
  font-size: 12.5px;
  line-height: 20px;
  border-bottom: 1px solid #a6a6a6;
  margin-bottom: 1px;
  position: relative;
}

.queries-head svg {
  margin-right: -3px;
  margin-top: -1px;
}

.query {
  width: 191px;
  height: 30.200px;
  display: flex;
  align-items: center;
  gap: 11px;
  padding-left: 8px;
  color: #f2f2f2;
  font-size: 14px;
}

.query.selected {
  background: #217346;
  color: #fff;
}

.center {
  width: 1160px;
  flex: none;
  padding: 13px 5px 0 5px;
  display: flex;
  flex-direction: column;
  gap: 7px;
  border-right: 1px solid #4f4f4f;
}

.formula-row {
  height: 34px;
  flex: none;
  display: flex;
  gap: 6px;
}

.formula-btns {
  width: 138px;
  flex: none;
  display: flex;
  align-items: center;
  background: #aeaeae;
  border: 1px solid #4a4a4a;
  padding-left: 15px;
  gap: 28px;
}

.fx {
  font-family: 'Liberation Serif', serif;
  font-style: italic;
  font-size: 20px;
  color: #7c7c7c;
}

.formula {
  flex: 1;
  display: flex;
  align-items: center;
  justify-content: space-between;
  background: #b0b0b0;
  border: 1px solid #4a4a4a;
  padding: 1px 8px 0 10px;
  font-family: 'Liberation Mono', 'DejaVu Sans Mono', monospace;
  font-size: 13.8px;
  color: #333;
  white-space: pre;
}

.formula b {
  font-weight: normal;
  color: #a31515;
}

/* data grid */
.grid {
  flex: 1;
  min-height: 0;
  display: flex;
  flex-direction: column;
  position: relative;
}

.grid-head {
  height: 27px;
  flex: none;
  display: flex;
  background: #666;
  border-top: 1px solid #444;
  border-bottom: 1px solid #444;
}

.hcell {
  flex: none;
  height: 25px;
  display: flex;
  align-items: center;
  padding-left: 3px;
  padding-bottom: 1px;
  color: #fff;
  font-size: 13.5px;
  font-weight: 500;
  border-right: 1px solid #444;
  white-space: nowrap;
  overflow: hidden;
}

.hcell.on {
  background: #419467;
}

.corner {
  width: 38px;
  padding-left: 6px;
  position: relative;
}

.corner-caret {
  border-left: 4px solid transparent;
  border-right: 4px solid transparent;
  border-top: 3px solid #fff;
  margin: 10px 0 0 1px;
}

.c1 { width: 244px; }
.c2 { width: 245px; }
.c3 { width: 201px; }
.c4 { width: 243px; }
.c5 { width: 178px; }

.abc {
  width: 27px;
  flex: none;
  font-size: 12px;
  line-height: 1;
}

.abc sup,
.abc sub {
  font-size: 11px;
  line-height: 0;
}

.abc sup {
  vertical-align: 4px;
}

.abc sub {
  vertical-align: -4px;
}

.cal {
  flex: none;
  margin-right: 8px;
  margin-left: -1px;
}

.hname {
  flex: 1;
}

.filter {
  width: 20px;
  height: 21px;
  flex: none;
  background: #fff;
  margin-right: 2px;
  position: relative;
}

.filter::after {
  content: "";
  position: absolute;
  left: 5px;
  top: 8px;
  border-left: 5px solid transparent;
  border-right: 5px solid transparent;
  border-top: 5px solid #555;
}

.grid-strip {
  height: 4px;
  flex: none;
  display: flex;
  background: #f2f2f2;
}

.strip-num {
  width: 38px;
  background: #666;
  border-bottom: 1px solid #444;
}

.strip-sel {
  width: 244px;
  background: #eef4f0;
}

.grid-body {
  flex: 1;
  min-height: 0;
  position: relative;
  overflow: hidden;
  background: #fff;
}

.rows {
  width: 1128px;
  table-layout: fixed;
  border-collapse: separate;
  border-spacing: 0;
  font-size: 13px;
  color: #3a3a3a;
}

.rows tr {
  height: 26.36px;
}

.rows th {
  width: 38px;
  background: #666;
  color: #e8e8e8;
  font-size: 15px;
  font-weight: normal;
  border-right: 1px solid #444;
  border-bottom: 1px solid #444;
}

.rows td {
  padding: 1px 4px 0;
  white-space: nowrap;
  overflow: hidden;
  border-right: 1px solid #d8d8d8;
  border-bottom: 2px solid #d8d8d8;
}

.rows td.c1 {
  width: 244px;
  background: #d5f1e3;
}

.rows td.c2 {
  width: 245px;
}

.rows td.c3 {
  width: 201px;
  font-size: 13.4px;
}

.rows td.c4 {
  width: 243px;
  text-align: right;
  font-style: italic;
  font-size: 14.3px;
}

.rows td.c5 {
  width: 157px;
  padding: 1px 0 0;
  text-align: right;
  font-style: italic;
  font-size: 14.3px;
  border-right: none;
}

.vbar {
  position: absolute;
  top: 0;
  right: 0;
  bottom: 0;
  width: 21px;
  background: #f0f0f0;
}

.vbar-thumb {
  position: absolute;
  top: 43px;
  bottom: 330px;
  left: 0;
  right: 0;
  background: #c8c8c8;
}

.vbar-up {
  position: absolute;
  top: 22px;
  left: 3px;
}

.vbar-down {
  position: absolute;
  top: 482px;
  left: 3px;
}

.hbar {
  position: absolute;
  left: 38px;
  right: 0;
  bottom: 0;
  height: 23px;
  background: #f0f0f0;
}

.hbar-thumb {
  position: absolute;
  left: 43px;
  top: 1px;
  bottom: 3px;
  width: 207px;
  background: #c8c8c8;
}

.hbar-left {
  position: absolute;
  left: 21px;
  top: 3px;
}

.hbar-right {
  position: absolute;
  right: 42px;
  top: 3px;
}

.watermark {
  position: absolute;
  left: 517px;
  bottom: 0;
  width: 208px;
  text-align: center;
  color: rgba(120, 120, 120, 0.17);
  pointer-events: none;
}

.wm-ar {
  font-family: 'DejaVu Sans', sans-serif;
  font-size: 58px;
  font-weight: bold;
  line-height: 60px;
}

.wm-en {
  font-family: 'Liberation Sans', Arial, sans-serif;
  font-size: 34px;
  font-weight: bold;
  line-height: 24px;
}

/* query settings */
.settings {
  flex: 1;
  min-width: 0;
  padding-left: 16px;
  color: #fff;
  font-size: 13.7px;
}

.settings-head {
  display: flex;
  justify-content: space-between;
  align-items: center;
  height: 55px;
  font-size: 23px;
  font-weight: 300;
  color: #efefef;
  padding: 18px 18px 0 3px;
  margin-bottom: 20px;
}

.section {
  display: flex;
  align-items: center;
  height: 20px;
  font-size: 14.6px;
  font-weight: 600;
}

.tri {
  width: 0;
  height: 0;
  margin-right: 8px;
  border-left: 3.5px solid transparent;
  border-right: 3.5px solid #ddd;
  border-bottom: 3.5px solid #ddd;
  border-top: 3.5px solid transparent;
}

.field-label {
  height: 20px;
  line-height: 20px;
  margin: 6px 0 0 14px;
}

.name-input {
  width: 273px;
  height: 28px;
  line-height: 26px;
  margin: 1px 0 0 14px;
  padding-left: 6px;
  background: #d4d4d4;
  color: #444;
  border: 1px solid #4a4a4a;
}

.all-props {
  height: 20px;
  line-height: 20px;
  margin: 10px 0 0 14px;
}

.section.applied {
  margin-top: 22px;
}

.steps {
  width: 273px;
  height: 366px;
  margin: 8px 0 0 14px;
  background: #d4d4d4;
  border: 1px solid #4a4a4a;
  color: #333;
}

.step {
  height: 25.100px;
  display: flex;
  align-items: center;
  justify-content: space-between;
  padding: 0 9px 0 25px;
}

.step.current {
  background: #419467;
  color: #fff;
  justify-content: flex-start;
  padding-left: 6px;
  gap: 6px;
}

.step-x {
  flex: none;
}

/* status bar */
.statusbar {
  height: 23px;
  flex: none;
  display: flex;
  align-items: center;
  background: #bdb9b6;
  font-size: 12.7px;
  color: #333;
  padding-left: 6px;
  white-space: nowrap;
}

.status-cols {
  width: 183px;
  font-size: 12.3px;
}

.status-right {
  margin-left: auto;
  padding-right: 3px;
}
```
